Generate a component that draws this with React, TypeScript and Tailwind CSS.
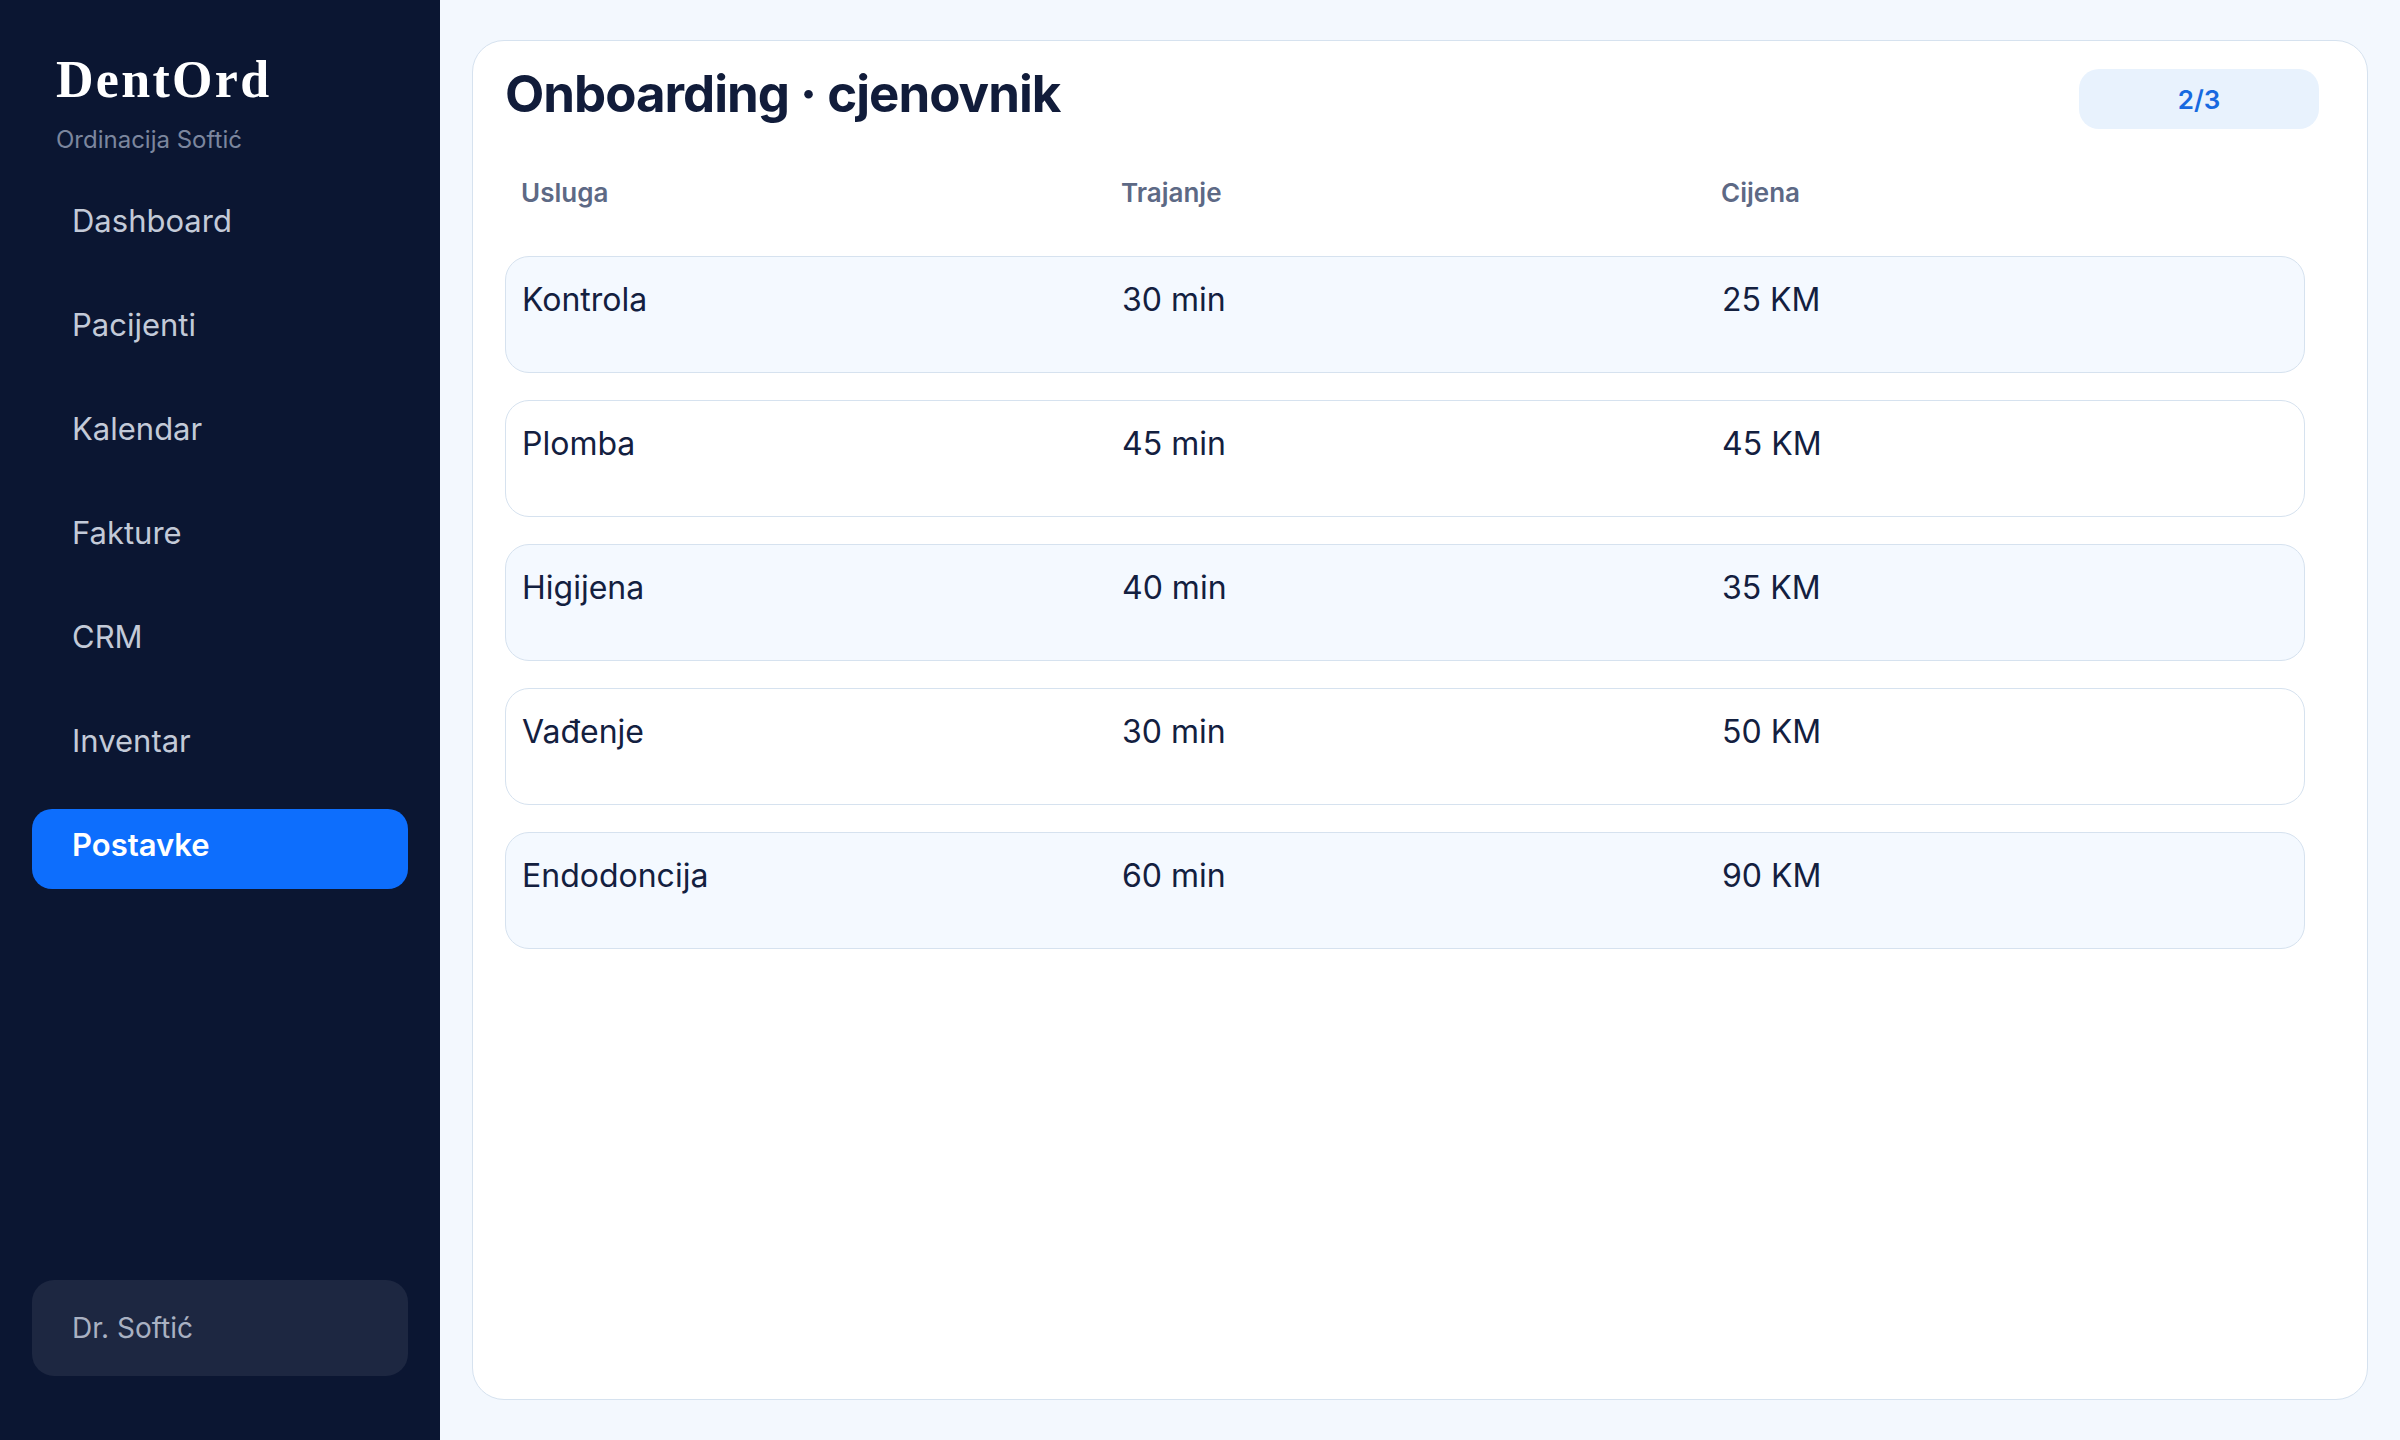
import React from 'react'

type Service = {
  name: string
  duration: string
  price: string
}

const navItems = ['Dashboard', 'Pacijenti', 'Kalendar', 'Fakture', 'CRM', 'Inventar', 'Postavke']

const services: Service[] = [
  { name: 'Kontrola', duration: '30 min', price: '25 KM' },
  { name: 'Plomba', duration: '45 min', price: '45 KM' },
  { name: 'Higijena', duration: '40 min', price: '35 KM' },
  { name: 'Vađenje', duration: '30 min', price: '50 KM' },
  { name: 'Endodoncija', duration: '60 min', price: '90 KM' },
]

function Sidebar({ active }: { active: string }) {
  return (
    <aside className="flex h-full w-[440px] shrink-0 flex-col bg-[#0b1632] px-8 pb-16 pt-[54px]">
      <div className="pl-6">
        <div className="font-['Liberation_Serif',serif] text-[52px] font-bold leading-none tracking-[2.3px] text-white">
          DentOrd
        </div>
        <div className="mt-5 text-[24px] leading-[1.15] text-[#7c869e]">Ordinacija Softić</div>
      </div>

      <nav className="mt-[31px] flex flex-col gap-6">
        {navItems.map((item) => {
          const isActive = item === active
          return (
            <div
              key={item}
              className={
                isActive
                  ? 'flex h-20 items-center rounded-[20px] bg-[#0d6efd] px-10 pb-[7px] text-[31px] font-semibold text-white'
                  : 'flex h-20 items-center rounded-[20px] px-10 pb-[7px] text-[31px] text-[#c3cad8]'
              }
            >
              {item}
            </div>
          )
        })}
      </nav>

      <div className="mt-auto flex h-24 items-center rounded-[22px] bg-[#1d2741] px-10 text-[28px] text-[#a9b1c2]">
        Dr. Softić
      </div>
    </aside>
  )
}

function PriceRow({ service, shaded }: { service: Service; shaded: boolean }) {
  return (
    <div
      className={
        shaded
          ? 'grid h-[117px] w-[1800px] grid-cols-[600px_600px_1fr] rounded-[24px] border border-[#d6e2ef] bg-[#f4f9ff] px-4 pt-[19px] text-[32px] leading-[1.5] text-[#13203f]'
          : 'grid h-[117px] w-[1800px] grid-cols-[600px_600px_1fr] rounded-[24px] border border-[#d6e2ef] bg-white px-4 pt-[19px] text-[32px] leading-[1.5] text-[#13203f]'
      }
    >
      <div>{service.name}</div>
      <div>{service.duration}</div>
      <div>{service.price}</div>
    </div>
  )
}

export default function App() {
  return (
    <div className="flex h-[1440px] w-full font-['Inter',sans-serif]">
      <Sidebar active="Postavke" />

      <main className="flex flex-1 flex-col bg-[#f3f8fe] px-8 py-10">
        <section className="flex-1 rounded-[32px] border border-[#d6e2ef] bg-white px-8 pt-6">
          <div className="flex items-start justify-between pr-4">
            <h1 className="text-[51px] font-bold leading-[1.12] tracking-[-1px] text-[#111c3a]">
              Onboarding · cjenovnik
            </h1>
            <div className="mt-1 flex h-[60px] w-[240px] items-center justify-center rounded-[20px] bg-[#e8f2fd] text-[26px] font-semibold text-[#1769e0]">
              2/3
            </div>
          </div>

          <div className="mt-[46px] grid grid-cols-[600px_600px_1fr] px-4 text-[26px] font-semibold leading-9 text-[#5d6985]">
            <div>Usluga</div>
            <div>Trajanje</div>
            <div>Cijena</div>
          </div>

          <div className="mt-[45px] flex flex-col gap-[27px]">
            {services.map((s, i) => (
              <PriceRow key={s.name} service={s} shaded={i % 2 === 0} />
            ))}
          </div>
        </section>
      </main>
    </div>
  )
}
